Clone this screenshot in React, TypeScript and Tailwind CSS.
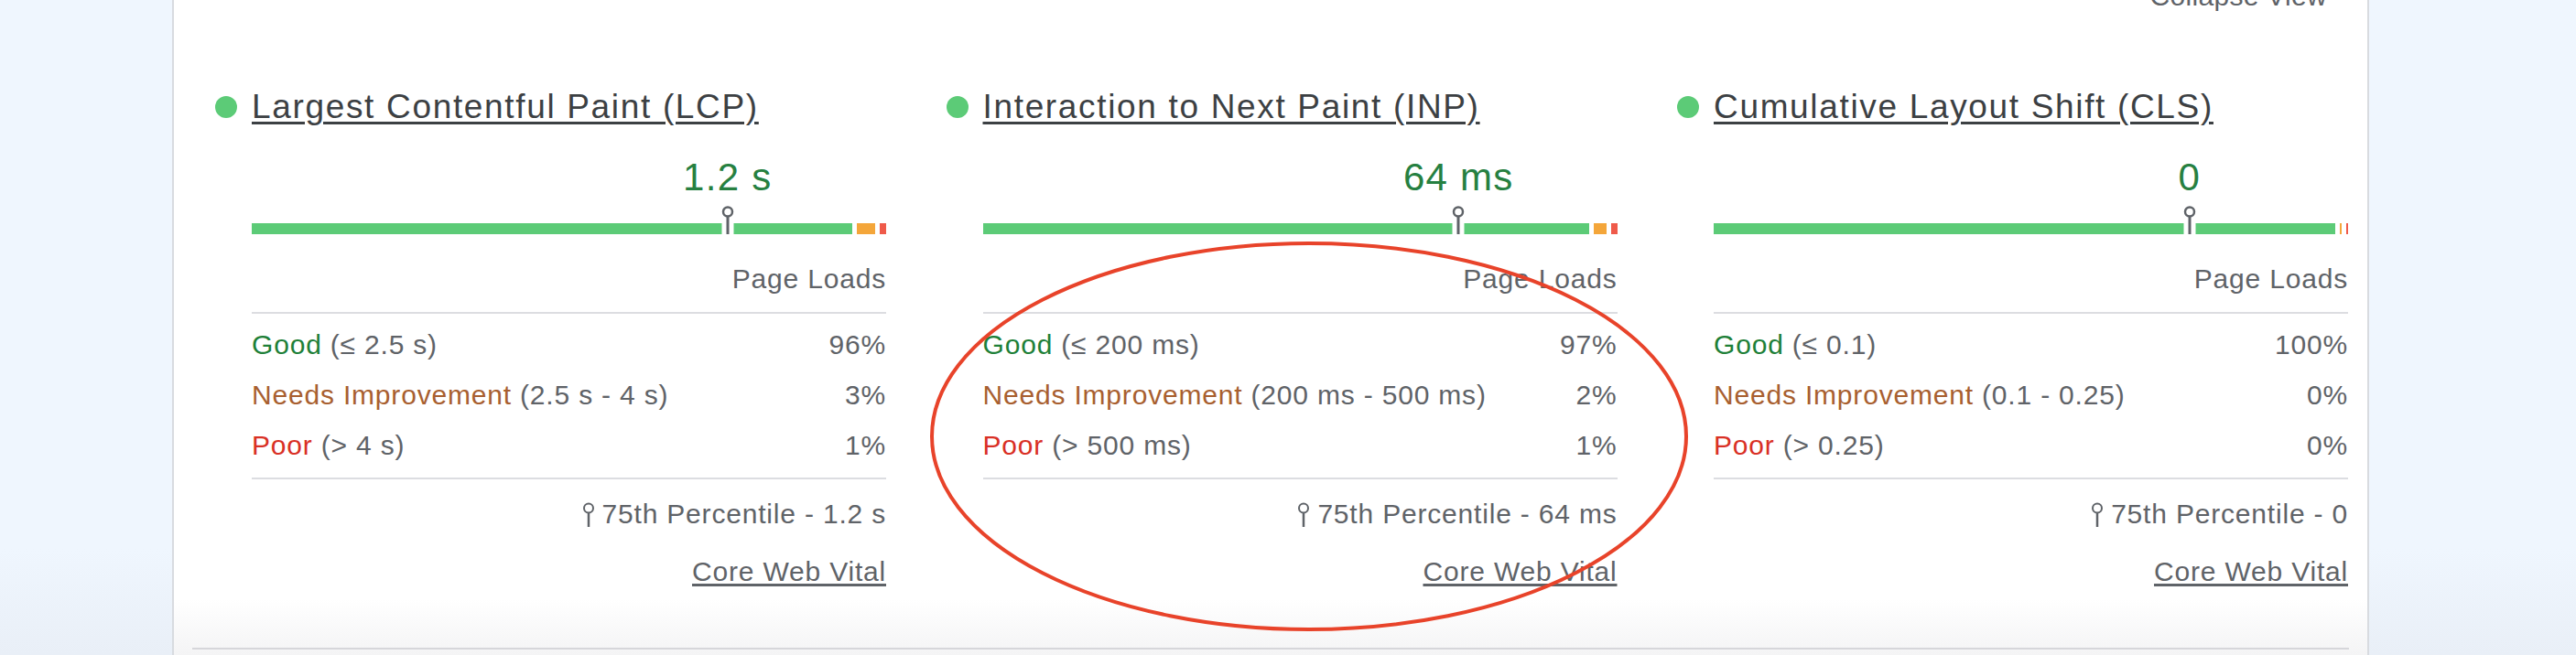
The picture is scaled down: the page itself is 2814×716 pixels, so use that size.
const metrics = [
  {
    title: "Largest Contentful Paint (LCP)",
    value: "1.2 s",
    dist: [96, 3, 1],
    ranges: ["(≤ 2.5 s)", "(2.5 s - 4 s)", "(> 4 s)"],
    p75: "1.2 s",
  },
  {
    title: "Interaction to Next Paint (INP)",
    value: "64 ms",
    dist: [97, 2, 1],
    ranges: ["(≤ 200 ms)", "(200 ms - 500 ms)", "(> 500 ms)"],
    p75: "64 ms",
  },
  {
    title: "Cumulative Layout Shift (CLS)",
    value: "0",
    dist: [100, 0, 0],
    ranges: ["(≤ 0.1)", "(0.1 - 0.25)", "(> 0.25)"],
    p75: "0",
  },
]

const labels = [
  { name: "Good", color: "text-[#1e8038]" },
  { name: "Needs Improvement", color: "text-[#a85f30]" },
  { name: "Poor", color: "text-[#d93025]" },
]

const barColors = ["bg-[#5ccb77]", "bg-[#f4a63a]", "bg-[#ef5a4a]"]

function Marker() {
  return (
    <svg className="absolute top-0 left-[75%] -ml-[7px]" width="14" height="31" viewBox="0 0 14 31">
      <rect x="0.5" y="19" width="13" height="12" fill="#ffffff" />
      <circle cx="7" cy="6.5" r="5" fill="#ffffff" stroke="#5f6368" strokeWidth="2.5" />
      <line x1="7" y1="11.5" x2="7" y2="31" stroke="#5f6368" strokeWidth="3" />
    </svg>
  )
}

function Pin() {
  return (
    <svg width="14" height="27" viewBox="0 0 14 27" className="shrink-0">
      <circle cx="7" cy="6.5" r="5" fill="none" stroke="#5f6368" strokeWidth="2" />
      <line x1="7" y1="11.5" x2="7" y2="27" stroke="#5f6368" strokeWidth="2.5" />
    </svg>
  )
}

function MetricCard({ metric }: { metric: (typeof metrics)[number] }) {
  return (
    <div>
      <div className="flex items-center gap-[16px]">
        <span className="w-[24px] h-[24px] rounded-full bg-[#5ccb77] shrink-0" />
        <a className="text-[37px] leading-[44px] tracking-[0.045em] text-[#3c4043] underline decoration-[3px] underline-offset-[4px] whitespace-nowrap">
          {metric.title}
        </a>
      </div>

      <div className="pl-[40px]">
        <div className="mt-[31px] flex h-[48px]">
          <div className="w-[75%] shrink-0" />
          <div className="w-0 flex justify-center">
            <span className="whitespace-nowrap text-[42px] leading-[48px] tracking-[0.03em] text-[#268041]">
              {metric.value}
            </span>
          </div>
        </div>

        <div className="relative mt-[7px] pt-[19px]">
          <div className="flex gap-[5px] h-[12px]">
            {metric.dist.map((d, i) => (
              <div key={i} className={`${barColors[i]} min-w-[2px] basis-0`} style={{ flexGrow: d }} />
            ))}
          </div>
          <Marker />
        </div>

        <div className="mt-[31px] text-right text-[30px] leading-[36px] tracking-[0.027em] text-[#5f6368]">Page Loads</div>
        <div className="mt-[18px] h-[2px] bg-[#dcdde1]" />

        <div className="mt-[16px] flex flex-col gap-[19px] text-[30px] leading-[36px] tracking-[0.027em] text-[#5f6368]">
          {labels.map((l, i) => (
            <div key={l.name} className="flex justify-between">
              <span>
                <span className={l.color}>{l.name}</span> {metric.ranges[i]}
              </span>
              <span>{metric.dist[i]}%</span>
            </div>
          ))}
        </div>

        <div className="mt-[17px] h-[2px] bg-[#dcdde1]" />
        <div className="mt-[20px] flex justify-end items-center gap-[8px] text-[30px] leading-[36px] tracking-[0.027em] text-[#5f6368]">
          <Pin />
          <span>75th Percentile - {metric.p75}</span>
        </div>
        <div className="mt-[27px] text-right text-[30px] leading-[36px] tracking-[0.027em] text-[#5f6368]">
          <a className="underline decoration-[3px] underline-offset-[3px]">Core Web Vital</a>
        </div>
      </div>
    </div>
  )
}

export default function App() {
  return (
    <div className="relative flex h-[716px] w-full overflow-hidden bg-[linear-gradient(to_bottom,#eff6fe_600px,#e9eff7_716px)] font-['Liberation_Sans',Arial,sans-serif]">
      <div className="w-[188px] shrink-0" />
      <div className="w-[2400px] shrink-0 flex flex-col border-x-2 border-[#d8dbe0] bg-[linear-gradient(to_bottom,#ffffff_655px,#f4f4f5_716px)]">
        <div className="-mt-[22px] flex justify-end pr-[44px] text-[30px] leading-[36px] tracking-[0.01em] text-[#5f6368]">
          Collapse View
        </div>

        <div className="mt-[81px] pl-[45px] grid grid-cols-[733px_733px_733px] gap-x-[65.5px]">
          {metrics.map((m) => (
            <MetricCard key={m.title} metric={m} />
          ))}
        </div>

        <div className="mt-auto mb-[6px] mx-[20px] h-[2px] bg-[#d6d6da]" />
      </div>

      <svg className="absolute left-[1014px] top-[262px]" width="832" height="430" viewBox="0 0 832 430">
        <ellipse cx="416" cy="215" rx="412" ry="211" fill="none" stroke="#e8432a" strokeWidth="4" />
      </svg>
    </div>
  )
}
